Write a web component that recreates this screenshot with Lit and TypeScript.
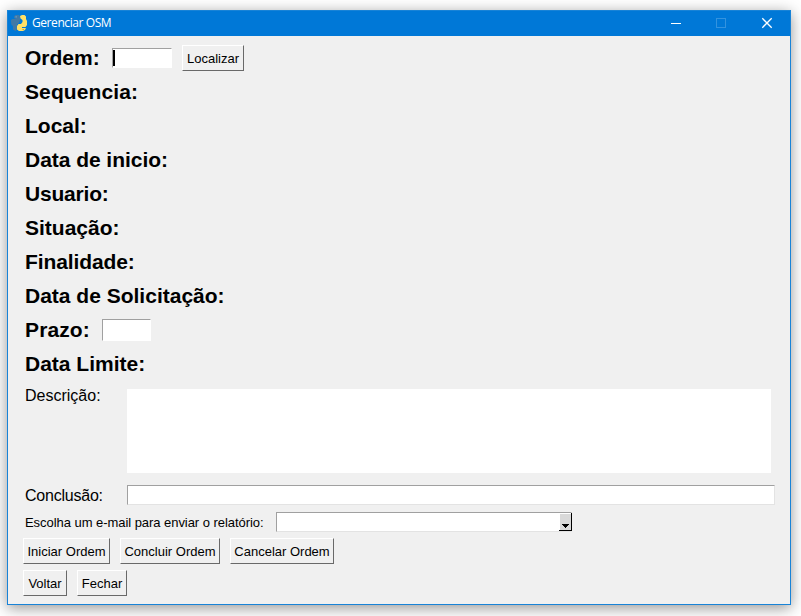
import { LitElement, html, css, svg } from "lit";
import { customElement, property } from "lit/decorators.js";

@customElement("push-button")
class PushButton extends LitElement {
  static styles = css`
    :host { display: block; flex: none; }
    button {
      display: block; box-sizing: border-box; width: 100%; height: 26px; margin: 0; padding: 1px 0 0;
      border: 1px solid; border-color: #fff #696969 #696969 #fff; border-radius: 0;
      background: #f0f0f0; color: #000; white-space: nowrap; text-align: center;
      font: 13px/22px "Liberation Sans", Arial, sans-serif;
    }
  `;
  render() { return html`<button><slot></slot></button>`; }
}

@customElement("title-bar")
class TitleBar extends LitElement {
  @property() caption = "";
  static styles = css`
    :host { display: flex; align-items: center; height: 26px; background: #0078d7; color: #fff; }
    .logo { display: block; flex: none; width: 16px; height: 16px; margin: 0 5px 0 4px; }
    .caption { flex: 1; font: 12px/24px "Open Sans", "Noto Sans", sans-serif; letter-spacing: -0.42px; padding-bottom: 1px; }
    .controls { display: block; width: 137px; height: 26px; }
  `;
  render() {
    return html`
      <svg class="logo" viewBox="0 0 16 16">
        ${svg`
          <path fill="#4179a6" d="M3 1.5L4.5 0H8L9 1.5V5L8 8L6 9.5V14L4.5 16L2 14.5V11L0.5 10L0 7V5L1.5 4H5L3 3Z"/>
          <path fill="#6fa2c9" d="M4.5 1.2h1.3v1.2H4.5z"/>
          <path fill="#ffe066" d="M9 1L11 0H13.5L15 1.5V4L16 6V10L14.5 12H11V13H15L14 15L12 16H8L6 14.5V11L7.5 9H10L11.5 7V5L9.5 3.5Z"/>
          <path fill="#b49a45" d="M11.5 14h1.3v1h-1.3z"/>`}
      </svg>
      <span class="caption">${this.caption}</span>
      <svg class="controls" viewBox="0 0 137 26" fill="none" shape-rendering="crispEdges">
        <path d="M17 13.5h10" stroke="#fff"/>
        <rect x="62.5" y="8.5" width="9" height="9" stroke="#3393df"/>
        <path d="M108.3 8.3l9.4 9.4m0-9.4l-9.4 9.4" stroke="#fff" stroke-width="1.3" shape-rendering="auto"/>
      </svg>`;
  }
}

@customElement("app-root")
class AppRoot extends LitElement {
  private details = [
    { name: "Sequencia:", tracking: 0.1 },
    { name: "Local:", tracking: 0 },
    { name: "Data de inicio:", tracking: -0.04 },
    { name: "Usuario:", tracking: -0.2 },
    { name: "Situação:", tracking: 0 },
    { name: "Finalidade:", tracking: -0.1 },
    { name: "Data de Solicitação:", tracking: 0 },
  ];

  static styles = css`
    :host {
      display: block; box-sizing: border-box; width: 801px; height: 616px; padding: 10px 10px 11px 7px;
      overflow: hidden; background: #fff; color: #000; font-family: "Liberation Sans", Arial, sans-serif;
    }
    .window {
      position: relative; box-sizing: border-box; width: 784px; height: 595px; background: #f0f0f0;
      box-shadow: 0 3px 14px rgba(0, 0, 0, 0.42);
    }
    .window::after {
      content: ""; position: absolute; inset: 0; border: 1px solid #1883d7; pointer-events: none;
    }
    .form { padding: 5px 0 0 18px; }
    .row { display: flex; align-items: center; height: 34px; }
    .title { font-size: 21px; font-weight: bold; line-height: 34px; white-space: nowrap; }
    .order .title { width: 87px; }
    .term .title { width: 77px; letter-spacing: 0.12px; }
    .label { font-size: 16px; line-height: 20px; width: 102px; flex: none; }
    .small { font-size: 13px; width: 251px; flex: none; white-space: nowrap; letter-spacing: -0.05px; }
    input, textarea {
      display: block; box-sizing: border-box; margin: 0; padding: 0; border: 0; border-radius: 0;
      background: #fff; outline: 0; resize: none; font: 13px "Liberation Sans", Arial, sans-serif;
    }
    .entry { border: 1px solid; border-color: #a0a0a0 #fff #fff #a0a0a0; }
    .field { position: relative; height: 20px; width: 60px; margin-right: 10px; }
    .field input { width: 60px; height: 20px; }
    .caret { position: absolute; left: 1px; top: 2px; width: 2px; height: 16px; background: #000; }
    .find { width: 62px; }
    .days { width: 49px; height: 22px; }
    .description { display: flex; height: 84px; margin-top: 8px; }
    .description .label { margin-top: -3px; }
    .description textarea { width: 644px; height: 84px; }
    .conclusion { display: flex; align-items: center; height: 20px; margin-top: 12px; }
    .conclusion input { width: 648px; height: 20px; border-color: #a0a0a0 #e3e3e3 #e3e3e3 #a0a0a0; }
    .conclusion .label { padding-top: 1px; letter-spacing: -0.22px; }
    .email { display: flex; align-items: center; height: 20px; margin-top: 7px; }
    .combo {
      display: flex; box-sizing: border-box; width: 296px; height: 20px; background: #fff;
      border: 1px solid; border-color: #a0a0a0 #f0f0f0 #e3e3e3 #a0a0a0;
    }
    .combo input { flex: 1; min-width: 0; height: 18px; }
    .drop { display: block; width: 13px; height: 18px; margin-right: -1px; }
    .actions { display: flex; gap: 10px; margin: 6px 0 0 -2px; }
    .start { width: 87px; }
    .finish { width: 100px; }
    .cancel { width: 104px; }
    .start, .cancel { letter-spacing: -0.04px; }
    .back { width: 44px; }
    .close { width: 50px; }
  `;

  render() {
    return html`
      <div class="window">
        <title-bar caption="Gerenciar OSM"></title-bar>
        <div class="form">
          <div class="row order">
            <span class="title">Ordem:</span>
            <div class="field"><input class="entry" /><i class="caret"></i></div>
            <push-button class="find">Localizar</push-button>
          </div>
          ${this.details.map((d) => html`
            <div class="row"><span class="title" style="letter-spacing:${d.tracking}px">${d.name}</span></div>`)}
          <div class="row term"><span class="title">Prazo:</span><input class="entry days" /></div>
          <div class="row"><span class="title">Data Limite:</span></div>
          <div class="description"><span class="label">Descrição:</span><textarea></textarea></div>
          <div class="conclusion"><span class="label">Conclusão:</span><input class="entry" /></div>
          <div class="email">
            <span class="small">Escolha um e-mail para enviar o relatório:</span>
            <div class="combo">
              <input />
              <svg class="drop" viewBox="0 0 13 18" shape-rendering="crispEdges">
                <path fill="#d9d9d9" d="M1 1h11v16H1z"/>
                <path fill="#000" d="M12 0h1v18H0v-1h12zM3 11h7v1H3zM4 12h5v1H4zM5 13h3v1H5zM6 14h1v1H6z"/>
              </svg>
            </div>
          </div>
          <div class="actions">
            <push-button class="start">Iniciar Ordem</push-button>
            <push-button class="finish">Concluir Ordem</push-button>
            <push-button class="cancel">Cancelar Ordem</push-button>
          </div>
          <div class="actions">
            <push-button class="back">Voltar</push-button>
            <push-button class="close">Fechar</push-button>
          </div>
        </div>
      </div>`;
  }
}
